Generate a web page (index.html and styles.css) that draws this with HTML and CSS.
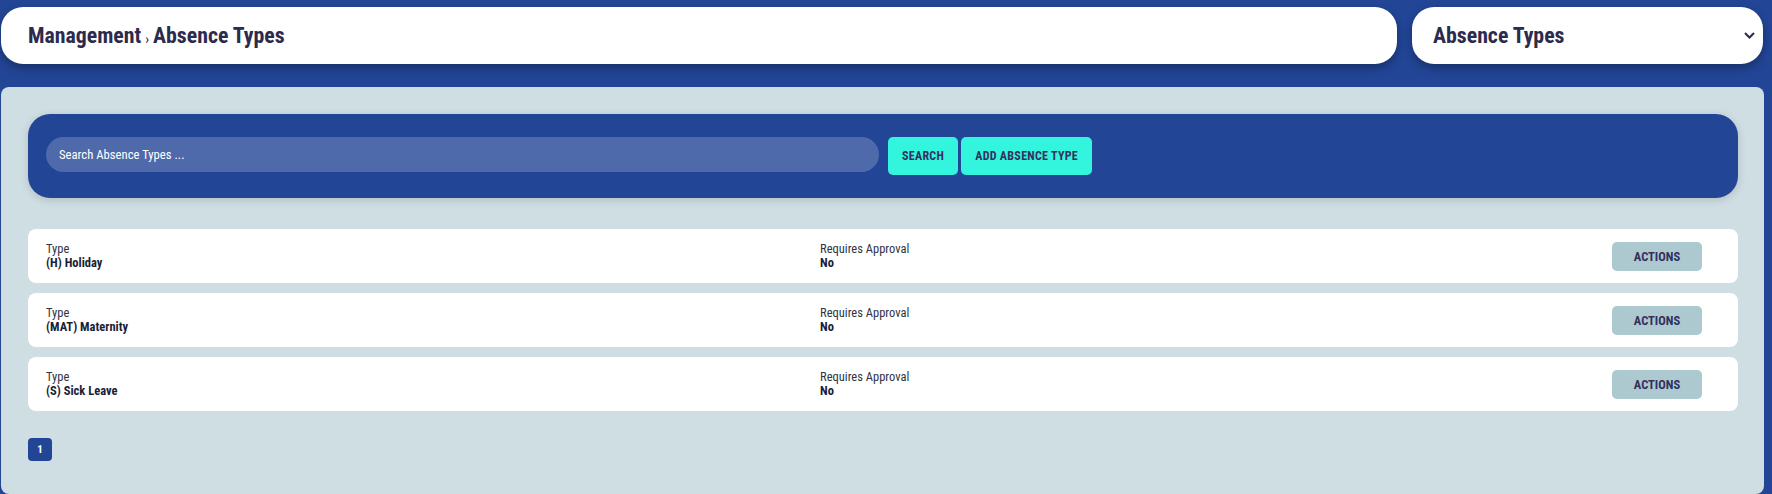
FILE: index.html
```html
<!DOCTYPE html>
<html lang="en">
<head>
    <meta charset="UTF-8">
    <meta name="viewport" content="width=device-width, initial-scale=1.0">
    <title>Absence Types</title>
    <link rel="stylesheet" href="styles.css">
</head>
<body>
    <div class="topbar">
        <div class="crumbs">
            <span>Management</span>
            <span class="sep">›</span>
            <span>Absence Types</span>
        </div>
        <div class="picker">
            <span>Absence Types</span>
            <svg width="11" height="7" viewBox="0 0 11 7"><polyline points="1,1 5.5,5.5 10,1" fill="none" stroke="#2c2a4d" stroke-width="2"/></svg>
        </div>
    </div>

    <main class="panel">
        <div class="search-card">
            <input type="text" class="search-input" placeholder="Search Absence Types ...">
            <button class="btn-cyan">Search</button>
            <button class="btn-cyan">Add Absence Type</button>
        </div>

        <div class="list">
            <div class="row">
                <div class="cell">
                    <div class="label">Type</div>
                    <div class="value">(H) Holiday</div>
                </div>
                <div class="cell">
                    <div class="label">Requires Approval</div>
                    <div class="value">No</div>
                </div>
                <button class="btn-actions">Actions</button>
            </div>
            <div class="row">
                <div class="cell">
                    <div class="label">Type</div>
                    <div class="value">(MAT) Maternity</div>
                </div>
                <div class="cell">
                    <div class="label">Requires Approval</div>
                    <div class="value">No</div>
                </div>
                <button class="btn-actions">Actions</button>
            </div>
            <div class="row">
                <div class="cell">
                    <div class="label">Type</div>
                    <div class="value">(S) Sick Leave</div>
                </div>
                <div class="cell">
                    <div class="label">Requires Approval</div>
                    <div class="value">No</div>
                </div>
                <button class="btn-actions">Actions</button>
            </div>
        </div>

        <div class="pager">
            <span class="page current">1</span>
        </div>
    </main>
</body>
</html>
```

FILE: styles.css
```css
body {
    margin: 0;
    background-color: #224596;
    font-family: "Roboto Condensed", "Liberation Sans Narrow", "Arial Narrow", Roboto, sans-serif;
    color: #2c2a4d;
}

.topbar {
    display: flex;
    gap: 15px;
    padding: 7px 9px 0 1px;
}

.crumbs, .picker {
    height: 57px;
    background: #ffffff;
    border-radius: 22px;
    box-shadow: 0 4px 10px rgba(0, 0, 0, 0.3);
    display: flex;
    align-items: center;
    font-size: 21.8px;
    font-weight: bold;
    color: #2c2a4d;
    box-sizing: border-box;
}

.crumbs {
    flex: 1;
    padding-left: 27px;
    gap: 4px;
}

.crumbs .sep {
    font-size: 14px;
    font-weight: normal;
    margin-top: 6px;
}

.picker {
    width: 351px;
    padding: 0 8px 0 21px;
    justify-content: space-between;
}

.panel {
    margin: 23px 8px 0 1px;
    background: #cfdee3;
    border-radius: 8px;
    padding: 27px 26px 32px 27px;
    min-height: 407px;
    box-sizing: border-box;
}

.search-card {
    background: #224596;
    border-radius: 22px;
    height: 84px;
    box-sizing: border-box;
    padding: 23px 18px 0;
    display: flex;
    align-items: flex-start;
    box-shadow: 0 2px 8px rgba(0, 0, 0, 0.15);
}

.search-input {
    width: 833px;
    height: 35px;
    box-sizing: border-box;
    border: none;
    border-radius: 18px;
    background: #4e6aab;
    padding: 0 13px;
    font-family: inherit;
    font-size: 12.7px;
    color: #ffffff;
    outline: none;
    margin-right: 9px;
}

.search-input::placeholder {
    color: #ffffff;
}

.btn-cyan {
    height: 38px;
    padding: 0 14px;
    margin-right: 3px;
    border: none;
    border-radius: 5px;
    background: #33f5dd;
    color: #33305e;
    font-family: inherit;
    font-size: 12px;
    font-weight: bold;
    letter-spacing: 0.3px;
    text-transform: uppercase;
    cursor: pointer;
}

.list {
    margin-top: 31px;
    display: flex;
    flex-direction: column;
    gap: 10px;
}

.row {
    height: 54px;
    background: #ffffff;
    border-radius: 8px;
    display: grid;
    grid-template-columns: 774px 1fr auto;
    align-items: center;
    padding: 0 36px 0 18px;
}

.label {
    font-size: 12.5px;
    color: #2f3440;
    line-height: 14px;
}

.value {
    font-size: 12.5px;
    font-weight: bold;
    color: #1b1e36;
    line-height: 14px;
}

.btn-actions {
    width: 90px;
    height: 29px;
    border: none;
    border-radius: 5px;
    background: #abc9cf;
    color: #33305e;
    font-family: inherit;
    font-size: 12.5px;
    font-weight: bold;
    text-transform: uppercase;
    cursor: pointer;
}

.pager {
    margin-top: 27px;
    display: flex;
    gap: 4px;
}

.page {
    width: 24px;
    height: 23px;
    border-radius: 4px;
    display: flex;
    align-items: center;
    justify-content: center;
    font-size: 11px;
    font-weight: bold;
}

.page.current {
    background: #224596;
    color: #ffffff;
}
```
